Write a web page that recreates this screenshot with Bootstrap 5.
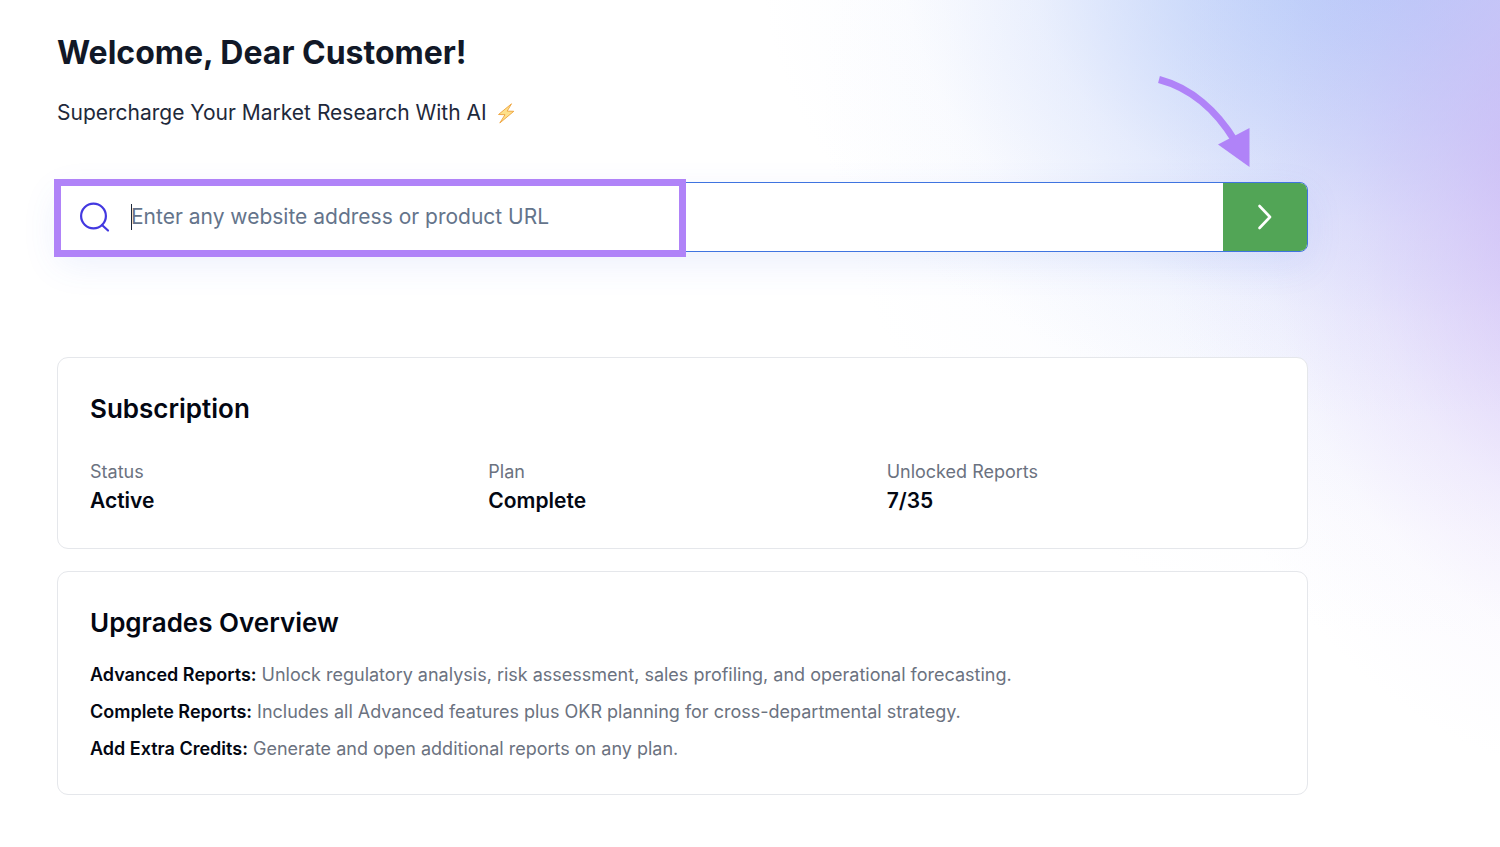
<!DOCTYPE html>
<html lang="en">
<head>
<meta charset="utf-8">
<meta name="viewport" content="width=device-width, initial-scale=1">
<title>Dashboard</title>
<link rel="stylesheet" href="https://cdn.jsdelivr.net/npm/bootstrap@5.3.0/dist/css/bootstrap.min.css">
<style>
  body {
    font-family: Inter, "Liberation Sans", sans-serif;
    color: #030712;
    min-height: 100vh;
    background-color: #fff;
    background-image:
      radial-gradient(ellipse 460px 600px at 1620px 180px, rgba(202,172,243,.75) 0%, rgba(203,176,244,.64) 20%, rgba(207,184,245,.48) 38%, rgba(212,193,247,.26) 58%, rgba(220,208,249,.09) 78%, rgba(230,220,250,0) 100%),
      radial-gradient(ellipse 640px 460px at 1400px -40px, rgba(165,190,248,.8) 0%, rgba(170,195,248,.7) 18%, rgba(178,200,248,.5) 38%, rgba(192,209,249,.26) 58%, rgba(212,223,251,.09) 78%, rgba(235,240,255,0) 100%),
      radial-gradient(ellipse 620px 540px at 1440px 100px, rgba(185,195,248,.42) 0%, rgba(190,200,248,.3) 32%, rgba(200,211,250,.16) 58%, rgba(215,224,252,.05) 80%, rgba(235,240,255,0) 100%);
    background-repeat: no-repeat;
  }
  .page { padding: 33px 192px 52px 57px; }
  .welcome { font-size: 32px; line-height: 40px; font-weight: 700; color: #111827; margin-bottom: 24px; }
  .tagline { font-size: 21px; line-height: 32px; color: #1e293b; margin-bottom: 53px; gap: 10px; }
  .bolt { width: 18px; height: 21px; }
  .search { height: 70px; margin-bottom: 105px; background: #fff; border: 1px solid #3f74e0; border-radius: 8px; box-shadow: 0 12px 36px rgba(70,110,235,.1); }
  .search-icon { width: 32px; height: 32px; margin-left: 20px; }
  .search .form-control, .search .form-control:focus { font-size: 21px; line-height: 32px; padding: 0 4px; margin-left: 17px; color: #1e293b; background: transparent; box-shadow: none; }
  .search .form-control::placeholder { color: #64748b; opacity: 1; }
  .caret { left: 73px; top: 21px; width: 1px; height: 26px; background: #1e293b; }
  .go { width: 84px; background: #52a556; border-radius: 0 7px 7px 0; }
  .marker { left: -4px; top: -4px; width: 632px; height: 78px; border: 7px solid #b083f8; pointer-events: none; }
  .arrow { right: 56px; bottom: 84px; width: 94px; height: 94px; pointer-events: none; }
  .panels { gap: 22px; }
  .panel { border: 1px solid #e5e7eb; border-radius: 11px; background: #fff; padding: 32px; }
  .panel h2 { font-size: 26px; line-height: 38px; font-weight: 600; margin: 0; }
  .term { font-size: 18px; line-height: 28px; font-weight: 400; color: #6b7280; }
  .value { font-size: 21px; line-height: 30px; font-weight: 600; margin: 0; }
  .facts { --bs-gutter-x: 10px; margin-top: 30px; margin-bottom: 0; }
  .notes { font-size: 18px; line-height: 27px; color: #6b7280; gap: 10px; margin: 19px 0 0; }
  .notes strong { font-weight: 600; color: #030712; }
</style>
</head>
<body>
<main class="page d-flex flex-column">
  <h1 class="welcome">Welcome, Dear Customer!</h1>
  <p class="tagline d-flex align-items-center">Supercharge Your Market Research With AI
    <svg class="bolt" viewBox="0 0 18 21" aria-hidden="true"><path d="M14.500.800 1.500 11.500 8 11.700 2.800 20 16.800 8.300 10.200 8.100Z" fill="#fde08a" stroke="#eda23c" stroke-width=".9" stroke-linejoin="round"/></svg>
  </p>

  <form class="search position-relative d-flex align-items-center">
    <label for="site" class="d-flex">
      <svg class="search-icon" viewBox="0 0 32 32" fill="none" stroke="#4338e0" stroke-width="2.200" stroke-linecap="round" role="img" aria-label="Website or product"><circle cx="15.500" cy="15" r="12.400"/><path d="M24 24 30 29.500"/></svg>
    </label>
    <input id="site" type="text" class="form-control border-0" placeholder="Enter any website address or product URL">
    <button type="submit" class="go btn border-0 p-0 h-100 flex-shrink-0 d-flex align-items-center justify-content-center" aria-label="Go">
      <svg width="32" height="32" viewBox="0 0 32 32" fill="none" stroke="#fff" stroke-width="2.600" stroke-linecap="round" stroke-linejoin="round" aria-hidden="true"><path d="M10.500 5 21 16 10.500 27"/></svg>
    </button>
    <span class="caret position-absolute"></span>
    <span class="marker position-absolute"></span>
    <svg class="arrow position-absolute" viewBox="0 0 94 94" aria-hidden="true"><path d="M2 6.500C34 15 60 38 78 68" fill="none" stroke="#b083f8" stroke-width="7"/><path d="M61 71.500 92.500 55V94Z" fill="#b083f8"/></svg>
  </form>

  <div class="panels d-flex flex-column">
    <section class="panel">
      <h2>Subscription</h2>
      <dl class="facts row">
        <div class="col-4"><dt class="term">Status</dt><dd class="value">Active</dd></div>
        <div class="col-4"><dt class="term">Plan</dt><dd class="value">Complete</dd></div>
        <div class="col-4"><dt class="term">Unlocked Reports</dt><dd class="value">7/35</dd></div>
      </dl>
    </section>
    <section class="panel">
      <h2>Upgrades Overview</h2>
      <ul class="notes list-unstyled d-flex flex-column">
        <li><strong>Advanced Reports:</strong> Unlock regulatory analysis, risk assessment, sales profiling, and operational forecasting.</li>
        <li><strong>Complete Reports:</strong> Includes all Advanced features plus OKR planning for cross-departmental strategy.</li>
        <li><strong>Add Extra Credits:</strong> Generate and open additional reports on any plan.</li>
      </ul>
    </section>
  </div>
</main>
<script src="https://cdn.jsdelivr.net/npm/bootstrap@5.3.0/dist/js/bootstrap.bundle.min.js"></script>
</body>
</html>
